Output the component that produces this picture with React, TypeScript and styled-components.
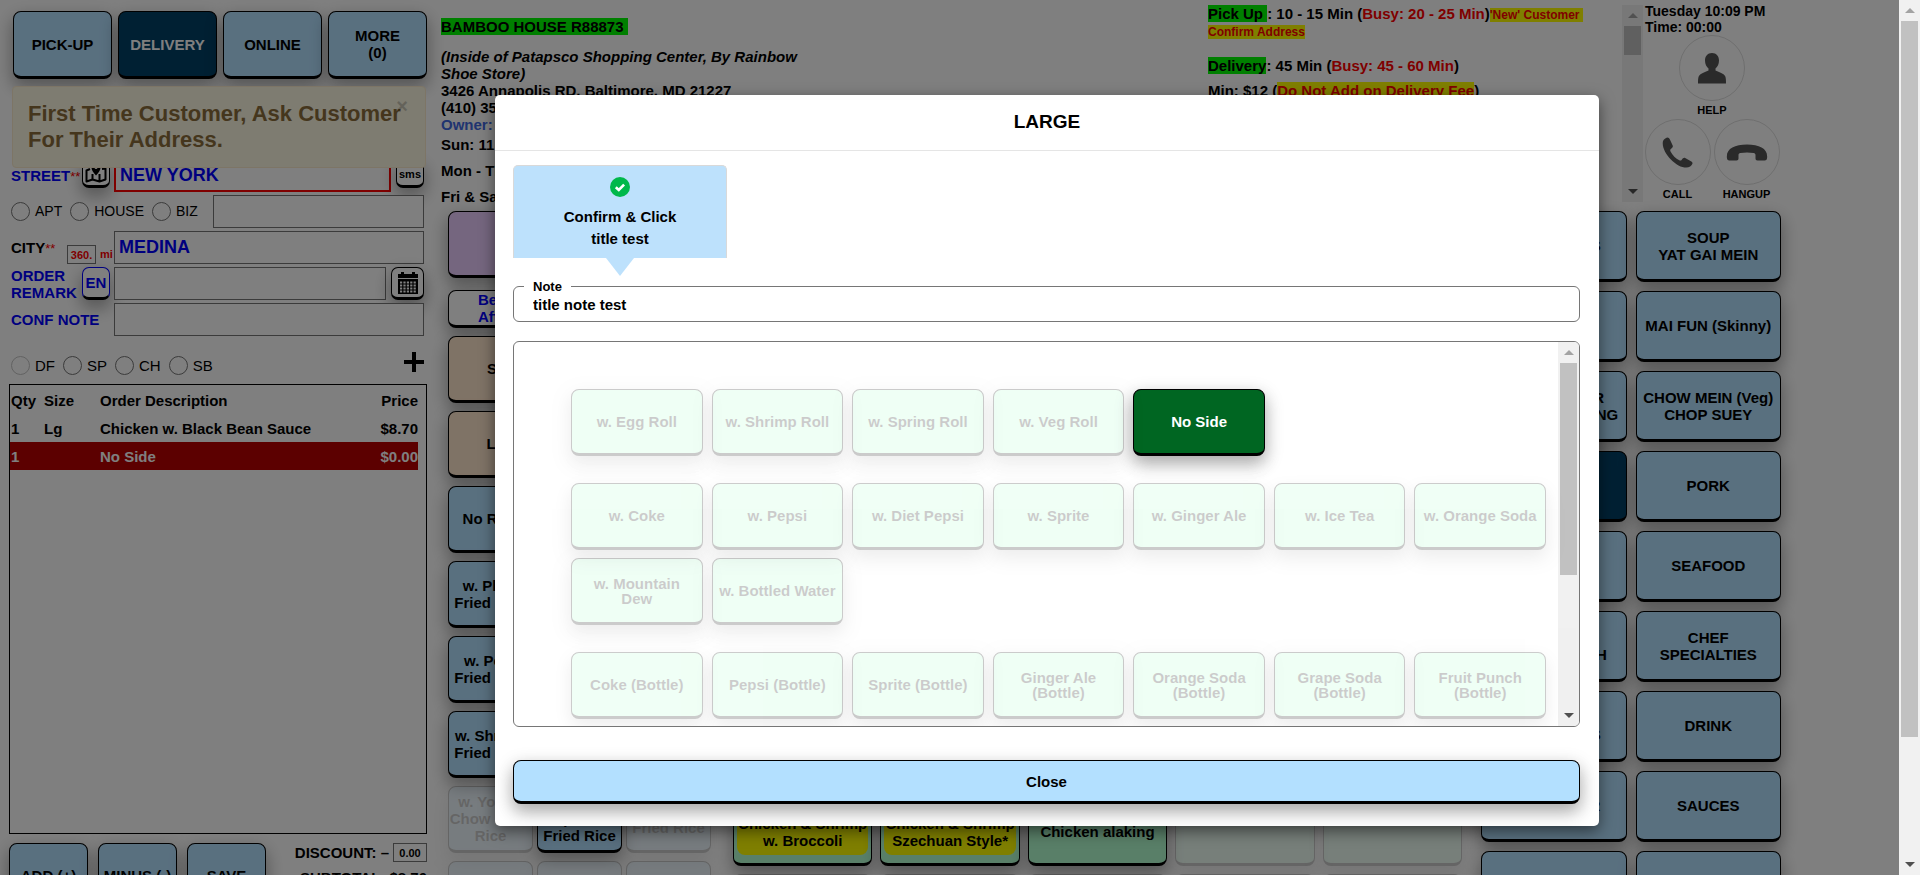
import React from "react";
import styled, { createGlobalStyle, css } from "styled-components";

const GlobalStyle = createGlobalStyle`
  *, *::before, *::after { box-sizing: border-box; }
  body {
    margin: 0;
    background: #fff;
    color: #000;
    font: bold 15px/17px "Liberation Sans", Arial, sans-serif;
  }
  button, input { font: inherit; color: inherit; margin: 0; }
  button { cursor: pointer; }
  p, h1, h2, fieldset { margin: 0; font: inherit; }
`;

/* ---------- shell ---------- */

const Shell = styled.div`
  display: flex;
  height: 100vh;
  overflow: hidden;
`;

const Screen = styled.div`
  position: relative;
  flex: 1;
  min-width: 0;
  overflow: hidden;
`;

const Page = styled.main`
  display: flex;
  padding-right: 118px;
`;

/* ---------- scroll bars ---------- */

const Track = styled.div`
  display: grid;
  grid-template-rows: 21px minmax(0, 1fr) 21px;
  justify-items: center;
  width: 21px;
  flex: none;
  background: #f1f1f1;
`;

const Lane = styled.div`
  width: 17px;
`;

const Thumb = styled.div<{ $size: number }>`
  height: ${(p) => p.$size}%;
  background: #c1c1c1;
`;

const Arrow = styled.span<{ $down?: boolean }>`
  align-self: center;
  border: 5px solid transparent;
  ${(p) =>
    p.$down
      ? css`border-top-color: #505050; border-bottom: 0;`
      : css`border-bottom-color: #a3a3a3; border-top: 0;`}
`;

const ScrollBar = ({ size }: { size: number }) => (
  <Track aria-hidden="true">
    <Arrow />
    <Lane>
      <Thumb $size={size} />
    </Lane>
    <Arrow $down />
  </Track>
);

/* ---------- buttons ---------- */

type Tone = "sky" | "navy" | "mint" | "forest" | "lilac" | "sand" | "plain";

const tones: Record<Tone, string> = {
  sky: "#b3e0ff",
  navy: "#004066",
  mint: "#b3ffd1",
  forest: "#006622",
  lilac: "#ebccff",
  sand: "#ffe6cc",
  plain: "#ffffff",
};

const Key = styled.button<{ $tone: Tone; $h?: number; $tight?: boolean }>`
  display: flex;
  align-items: center;
  justify-content: center;
  width: 100%;
  min-width: 0;
  height: ${(p) => p.$h ?? 67}px;
  padding: 0;
  border: 1px solid #000;
  border-bottom-width: 3px;
  border-radius: 8px;
  background: ${(p) => tones[p.$tone]};
  color: ${(p) => (p.$tone === "navy" || p.$tone === "forest" ? "#fff" : "#000")};
  line-height: ${(p) => (p.$tight ? 15 : 17)}px;
  text-align: center;
  white-space: pre;
  box-shadow: 0 8px 16px rgba(0, 0, 0, 0.2), 0 6px 20px rgba(0, 0, 0, 0.19);
  &:disabled {
    opacity: 0.2;
    cursor: default;
  }
`;

const SmallKey = styled.button<{ $w: number; $h: number; $color?: string }>`
  display: flex;
  align-items: center;
  justify-content: center;
  flex: none;
  width: ${(p) => p.$w}px;
  height: ${(p) => p.$h}px;
  padding: 0;
  border: 1px solid currentColor;
  border-bottom: 3px solid #000;
  border-radius: 7px;
  background: #fff;
  color: ${(p) => p.$color ?? "#000"};
  box-shadow: 0 8px 16px rgba(0, 0, 0, 0.2), 0 6px 20px rgba(0, 0, 0, 0.19);
`;

const TextKey = styled(SmallKey)`
  padding-top: 4px;
  font-size: 11px;
`;

/* ---------- order panel ---------- */

const OrderPanel = styled.section`
  flex: none;
  width: 440px;
  padding: 11px 13px 0 9px;
`;

const OrderTypes = styled.nav`
  display: grid;
  grid-template-columns: repeat(4, 1fr);
  gap: 6px;
  margin-left: 4px;
`;

const Form = styled.form`
  position: relative;
  display: flex;
  flex-direction: column;
  gap: 3px;
  padding: 80px 3px 0 2px;
`;

const Notice = styled.div`
  position: absolute;
  z-index: 1;
  top: 7px;
  left: 3px;
  right: 1px;
  height: 82px;
  padding: 14px 15px;
  border: 1px solid #faebcc;
  border-radius: 4px;
  background: #fcf8e3;
  color: #8a6d3b;
  font-size: 22px;
  line-height: 26px;
  white-space: pre;
`;

const NoticeClose = styled.button`
  position: absolute;
  top: 7px;
  right: 17px;
  padding: 0;
  border: 0;
  background: none;
  color: #000;
  opacity: 0.2;
  font-size: 20px;
  line-height: 24px;
`;

const Row = styled.div`
  display: flex;
  height: 33px;
`;

const Label = styled.label<{ $blue?: boolean; $w?: number }>`
  flex: none;
  align-self: center;
  width: ${(p) => p.$w ?? 103}px;
  color: ${(p) => (p.$blue ? "#0000ff" : "#000")};
  white-space: pre;
`;

const Mark = styled.span`
  color: #ff0000;
  font-size: 13px;
  font-weight: normal;
`;

const Field = styled.input<{ $alert?: boolean; $w?: number }>`
  ${(p) => (p.$w ? css`width: ${p.$w}px; margin-left: auto;` : css`flex: 1; min-width: 0;`)}
  height: 100%;
  padding: 0 4px;
  border: ${(p) => (p.$alert ? "2px solid #ff0000" : "1px solid #767676")};
  border-radius: 0;
  background: #fff;
  color: #0000ff;
  font-size: 18px;
`;

const Spacer = styled.span<{ $w: number }>`
  flex: none;
  width: ${(p) => p.$w}px;
`;

const TinyField = styled.input<{ $color: string; $w: number }>`
  flex: none;
  width: ${(p) => p.$w}px;
  height: 19px;
  padding: 0 2px;
  border: 1px solid #767676;
  background: #fff;
  color: ${(p) => p.$color};
  font-size: 11px;
  text-align: center;
`;

const Distance = styled.label`
  display: flex;
  align-items: center;
  align-self: flex-end;
  gap: 4px;
  width: 47px;
  color: #ff0000;
  font-size: 11px;
`;

const Choices = styled.div<{ $size: number }>`
  display: flex;
  align-items: center;
  gap: 8px;
  font-size: ${(p) => p.$size}px;
  font-weight: normal;
`;

const Choice = styled.label`
  display: flex;
  align-items: center;
  gap: 5px;
`;

const Radio = styled.input`
  appearance: none;
  width: 19px;
  height: 19px;
  border: 1px solid #767676;
  border-radius: 50%;
  background: #fff;
  &:disabled {
    border-color: #c4c4c4;
  }
`;

const OptionRow = styled.div`
  display: flex;
  align-items: center;
  justify-content: space-between;
  height: 32px;
  margin-top: 13px;
  padding: 0 3px 0 2px;
`;

const PlusButton = styled.button`
  display: flex;
  padding: 0;
  margin-bottom: 6px;
  border: 0;
  background: none;
`;

const OrderBox = styled.div`
  min-height: 450px;
  margin-top: 3px;
  padding: 1px 8px 0 0;
  border: 1px solid #000;
`;

const OrderTable = styled.table`
  width: 100%;
  border-collapse: collapse;
  table-layout: fixed;
  th, td {
    height: 28px;
    padding: 0 0 0 1px;
    text-align: left;
    font-weight: bold;
  }
  th:nth-child(1) { width: 33px; }
  th:nth-child(2) { width: 56px; }
  th:last-child { width: 60px; }
  th:last-child, td:last-child { text-align: right; }
`;

const Line = styled.tr<{ $picked?: boolean }>`
  ${(p) => p.$picked && css`background: #b80000; color: #fff;`}
`;

const OrderFoot = styled.div`
  display: flex;
  justify-content: space-between;
  margin-top: 9px;
`;

const FootKeys = styled.div`
  display: grid;
  grid-template-columns: repeat(3, 79px);
  gap: 10px;
`;

const Totals = styled.div`
  display: flex;
  flex-direction: column;
  align-items: flex-end;
  gap: 7px;
  white-space: pre;
`;

const Discount = styled.label`
  display: flex;
  align-items: center;
  gap: 4px;
`;

/* ---------- store info ---------- */

const Workspace = styled.div`
  flex: 1;
  min-width: 0;
  margin-left: 1px;
`;

const TopBar = styled.header`
  display: flex;
  height: 202px;
  padding-top: 3px;
`;

const InfoPane = styled.div`
  display: flex;
  flex: 1;
  min-width: 0;
  margin-top: 2px;
  overflow: hidden;
`;

const InfoText = styled.div`
  display: grid;
  grid-template-columns: 767fr 414fr;
  flex: 1;
  min-width: 0;
  overflow: hidden;
`;

const Store = styled.div`
  max-width: 380px;
  padding-top: 13px;
  p { margin-bottom: 9px; }
`;

const StoreName = styled.h1`
  margin-bottom: 13px;
  line-height: 17px;
`;

const Address = styled.div`
  margin-bottom: 3px;
`;

const Hl = styled.mark<{ $bg: string; $fg?: string; $small?: boolean }>`
  background: ${(p) => p.$bg};
  color: ${(p) => p.$fg ?? "#000"};
  white-space: pre-wrap;
  ${(p) => p.$small && css`font-size: 12px; line-height: 12px;`}
`;

const Red = styled.span`
  color: #ff0000;
`;

const Owner = styled.span`
  color: #4169e1;
`;

const Times = styled.div`
  p:nth-child(1) { margin-bottom: 18px; }
  p:nth-child(2) { margin-bottom: 8px; }
`;

const Contact = styled.aside`
  flex: none;
  width: 138px;
  padding: 0 2px;
  font-size: 14px;
  line-height: 16px;
  white-space: pre;
`;

const CallRow = styled.div`
  display: flex;
  justify-content: center;
  gap: 3px;
`;

const CallItem = styled.button`
  display: flex;
  flex-direction: column;
  align-items: center;
  width: 66px;
  height: 84px;
  padding: 0;
  border: 0;
  background: none;
  font-size: 11px;
  line-height: 19px;
`;

const Round = styled.span`
  display: flex;
  flex: none;
  align-items: center;
  justify-content: center;
  width: 66px;
  height: 66px;
  border: 1px solid #ddd;
  border-radius: 50%;
`;

/* ---------- menu ---------- */

const MenuArea = styled.div`
  display: flex;
  padding: 9px 0 0 7px;
`;

const Options = styled.div`
  display: grid;
  grid-template-columns: repeat(6, 1fr);
  column-gap: 4px;
  row-gap: 8px;
  align-content: start;
  flex: none;
  width: 263px;
  margin-right: 22px;
`;

const OptionCell = styled.div<{ $span: number; $before?: number }>`
  grid-column: span ${(p) => p.$span};
  margin-top: ${(p) => p.$before ?? 0}px;
`;

const BlueText = styled.span`
  width: 100%;
  padding-left: 29px;
  color: #0000ff;
  text-align: left;
`;

const Dishes = styled.div`
  display: grid;
  grid-template-columns: repeat(5, 1fr);
  gap: 8px;
  align-content: start;
  flex: 1;
  min-width: 0;
  padding-top: 63px;
`;

const Spicy = styled.span`
  width: 100%;
  margin: 0 3px;
  padding: 6px 0;
  border-radius: 8px;
  background: #ffff00;
`;

const Categories = styled.nav`
  display: grid;
  grid-template-columns: 1fr 1fr;
  gap: 9px;
  align-content: start;
  flex: none;
  width: 300px;
  margin-left: 19px;
`;

/* ---------- dialog ---------- */

const Backdrop = styled.div`
  position: absolute;
  z-index: 2;
  inset: 0;
  padding: 95px 300px 0 495px;
  background: rgba(0, 0, 0, 0.5);
`;

const Dialog = styled.section`
  border-radius: 5px;
  background: #fff;
  box-shadow: 0 5px 15px rgba(0, 0, 0, 0.5);
`;

const DialogTitle = styled.h2`
  padding: 16px 0 18px;
  border-bottom: 1px solid #e5e5e5;
  font-size: 19px;
  line-height: 21px;
  text-align: center;
`;

const DialogBody = styled.div`
  padding: 14px 19px 22px 18px;
`;

const Callout = styled.div`
  position: relative;
  display: flex;
  flex-direction: column;
  align-items: center;
  width: 214px;
  height: 93px;
  padding-top: 11px;
  border: 1px solid #d9d9d9;
  border-bottom: 0;
  border-radius: 5px 5px 0 0;
  background: #bde1fc;
  line-height: 22px;
  &::after {
    content: "";
    position: absolute;
    top: 100%;
    border: 14px solid transparent;
    border-top: 18px solid #bde1fc;
    border-bottom: 0;
  }
  svg { margin-bottom: 9px; }
`;

const NoteBox = styled.fieldset`
  min-width: 0;
  height: 43px;
  margin-top: 21px;
  padding: 0 19px;
  border: 1px solid #767676;
  border-radius: 6px;
`;

const NoteLegend = styled.legend`
  margin-left: -9px;
  padding: 0 9px;
  font-size: 13px;
  line-height: 15px;
`;

const NoteInput = styled.input`
  display: block;
  width: 100%;
  height: 21px;
  padding: 0;
  border: 0;
  background: none;
`;

const SideBox = styled.div`
  display: flex;
  height: 386px;
  margin: 19px 0 33px;
  border: 1px solid #767676;
  border-radius: 6px;
  overflow: hidden;
`;

const SideGroups = styled.div`
  display: flex;
  flex-direction: column;
  gap: 27px;
  flex: 1;
  min-width: 0;
  padding: 47px 12px 0 57px;
`;

const SideGroup = styled.div`
  display: grid;
  grid-template-columns: repeat(7, 1fr);
  gap: 8px 9px;
`;

/* ---------- icons ---------- */

const MapIcon = () => (
  <svg width="22" height="20" viewBox="0 0 22 20" fill="none" stroke="#000" strokeWidth="2" strokeLinejoin="round">
    <path d="M5 6 1.500 7.500v11l6-2 7 2 6-2v-11L17 6M7.500 11v5.500M14.500 11v7.500" />
    <path d="M11 12.500C8.500 9.500 6.500 7 6.500 4.700a4.500 4.500 0 0 1 9 0C15.500 7 13.500 9.500 11 12.500Z" fill="#000" stroke="none" />
    <circle cx="11" cy="4.500" r="1.500" fill="#fff" stroke="none" />
  </svg>
);

const CalendarIcon = () => (
  <svg width="22" height="24" viewBox="0 0 22 24">
    <path d="M1 3h3V1h3v2h8V1h3v2h3v4H1ZM1 8h20v15H1Z" fill="#000" />
    <g fill="#fff">
      {[0, 1, 2, 3].map((r) =>
        [0, 1, 2, 3, 4].map((c) => (
          <rect key={`${r}${c}`} x={3 + c * 3.4} y={10.5 + r * 3} width="2.200" height="2" />
        ))
      )}
    </g>
  </svg>
);

const PlusIcon = () => (
  <svg width="20" height="20" viewBox="0 0 20 20" stroke="#000" strokeWidth="4">
    <path d="M10 0v20M0 10h20" />
  </svg>
);

const PersonIcon = () => (
  <svg width="28" height="31" viewBox="0 0 28 31" fill="#555">
    <path d="M14 0c4.500 0 7 3.200 7 7.500 0 3.600-1.400 6.500-3.500 8v2c4 1.800 8 3 9.600 5.500.9 1.500.9 5 .9 7.500H0c0-2.500 0-6 .9-7.500C2.500 20.500 6.500 19.300 10.500 17.500v-2C8.400 14 7 11.100 7 7.500 7 3.200 9.500 0 14 0Z" />
  </svg>
);

const PhoneIcon = () => (
  <svg width="31" height="31" viewBox="0 0 31 31" fill="#555">
    <path d="M1 4C2 1.800 4.500.6 5.500.6c1.200 0 2 1 3 3.200l2.200 4.700c.5 1.300-.2 2.200-1.700 3.300-1 .8-1 1.600-.3 2.900 1.800 3.400 5 6.800 8.600 8.600 1 .5 1.700.3 2.500-.6 1.200-1.500 2-2.300 3.400-1.600l5.300 3c1.800 1 2.300 1.700 1.800 3-.7 1.700-3 3.500-6 3.500C14 30.600-1.500 14.500 1 4Z" />
  </svg>
);

const HangupIcon = () => (
  <svg width="42" height="17" viewBox="0 0 42 17" fill="#555">
    <path d="M1 14.500C-.5 5 8 .5 21 .5S42.500 5 41 14.500c-.2 1.300-1 2-2.200 2h-7.300c-1.300 0-2-.7-2-2v-3.300c0-1.300-.6-2-1.900-2.200a45 45 0 0 0-13.200 0c-1.300.2-1.900.9-1.900 2.200v3.300c0 1.300-.7 2-2 2H3.200c-1.200 0-2-.7-2.200-2Z" />
  </svg>
);

const TickIcon = () => (
  <svg width="20" height="20" viewBox="0 0 20 20">
    <circle cx="10" cy="10" r="10" fill="#00b84a" />
    <path d="m5.800 10.200 3 2.800 5.300-5.300" fill="none" stroke="#fff" strokeWidth="2.600" />
  </svg>
);

/* ---------- data ---------- */

type Item = { text: string; tone?: Tone; off?: boolean; spicy?: boolean };

const rice: Item[] = [
  { text: "w. Plain\nFried Rice" },
  { text: "w. Beef\nFried Rice" },
  { text: "w. Veg\nFried Rice" },
  { text: "w. Pork\nFried Rice" },
  { text: "w. Ham\nFried Rice" },
  { text: "w. Egg\nFried Rice" },
  { text: "w. Shrimp\nFried Rice" },
  { text: "w. Crab\nFried Rice" },
  { text: "w. Onion\nFried Rice" },
  { text: "w. Young\nChow Fried\nRice", off: true },
  { text: "w. House\nSpecial\nFried Rice" },
  { text: "w. Duck\nFried Rice", off: true },
  { text: "", off: true },
  { text: "", off: true },
  { text: "", off: true },
];

const emptySlots = (n: number): Item[] => Array.from({ length: n }, () => ({ text: "", off: true }));

const dishes: Item[] = [
  ...emptySlots(35),
  { text: "Chicken & Shrimp\nw. Broccoli", spicy: true },
  { text: "Chicken & Shrimp\nSzechuan Style*", spicy: true },
  { text: "Chicken alaking" },
  ...emptySlots(7),
];

const categories: Item[] = [
  { text: "APPETIZERS" },
  { text: "SOUP\nYAT GAI MEIN" },
  { text: "LO MEIN" },
  { text: "MAI FUN (Skinny)" },
  { text: "SWEET SOUR\nEGG FOO YOUNG" },
  { text: "CHOW MEIN (Veg)\nCHOP SUEY" },
  { text: "CHICKEN", tone: "navy" },
  { text: "PORK" },
  { text: "BEEF" },
  { text: "SEAFOOD" },
  { text: "DAILY\nVALUE LUNCH" },
  { text: "CHEF\nSPECIALTIES" },
  { text: "HEALTHY\nDIET DISHES" },
  { text: "DRINK" },
  { text: "SIDE ORDER" },
  { text: "SAUCES" },
  { text: "DESSERT" },
  { text: "EXTRA" },
];

const sides: string[][] = [
  ["w. Egg Roll", "w. Shrimp Roll", "w. Spring Roll", "w. Veg Roll", "No Side"],
  [
    "w. Coke", "w. Pepsi", "w. Diet Pepsi", "w. Sprite", "w. Ginger Ale", "w. Ice Tea", "w. Orange Soda",
    "w. Mountain\nDew", "w. Bottled Water",
  ],
  [
    "Coke (Bottle)", "Pepsi (Bottle)", "Sprite (Bottle)", "Ginger Ale\n(Bottle)", "Orange Soda\n(Bottle)",
    "Grape Soda\n(Bottle)", "Fruit Punch\n(Bottle)",
  ],
];

/* ---------- sections ---------- */

const OrderSection = () => (
  <OrderPanel>
    <OrderTypes>
      <Key $tone="sky" $h={68}>PICK-UP</Key>
      <Key $tone="navy" $h={68}>DELIVERY</Key>
      <Key $tone="sky" $h={68}>ONLINE</Key>
      <Key $tone="sky" $h={68}>{"MORE\n(0)"}</Key>
    </OrderTypes>
    <Form onSubmit={(e) => e.preventDefault()}>
      <Notice role="alert">
        {"First Time Customer, Ask Customer\nFor Their Address."}
        <NoticeClose type="button" aria-label="Dismiss">×</NoticeClose>
      </Notice>
      <Row>
        <Label $blue $w={71} htmlFor="street">STREET<Mark>**</Mark></Label>
        <SmallKey type="button" $w={28} $h={29} aria-label="Open map"><MapIcon /></SmallKey>
        <Spacer $w={4} />
        <Field id="street" $alert defaultValue="NEW YORK" />
        <Spacer $w={5} />
        <TextKey type="button" $w={28} $h={29}>sms</TextKey>
      </Row>
      <Row>
        <Choices $size={14}>
          <Choice><Radio type="radio" name="place" />APT</Choice>
          <Choice><Radio type="radio" name="place" />HOUSE</Choice>
          <Choice><Radio type="radio" name="place" />BIZ</Choice>
        </Choices>
        <Field $w={211} aria-label="Unit" />
      </Row>
      <Row>
        <Label $w={56} htmlFor="city">CITY<Mark>**</Mark></Label>
        <Distance>
          <TinyField $w={29} $color="#ff0000" defaultValue="360." />mi
        </Distance>
        <Field id="city" defaultValue="MEDINA" />
      </Row>
      <Row>
        <Label $blue $w={71} htmlFor="remark">{"ORDER\nREMARK"}</Label>
        <SmallKey type="button" $w={28} $h={33} $color="#0000ff">EN</SmallKey>
        <Spacer $w={4} />
        <Field id="remark" />
        <Spacer $w={5} />
        <SmallKey type="button" $w={33} $h={33} aria-label="Pick a date"><CalendarIcon /></SmallKey>
      </Row>
      <Row>
        <Label $blue htmlFor="conf">CONF NOTE</Label>
        <Field id="conf" />
      </Row>
    </Form>
    <OptionRow>
      <Choices $size={15}>
        <Choice><Radio type="radio" name="kind" disabled />DF</Choice>
        <Choice><Radio type="radio" name="kind" />SP</Choice>
        <Choice><Radio type="radio" name="kind" />CH</Choice>
        <Choice><Radio type="radio" name="kind" />SB</Choice>
      </Choices>
      <PlusButton aria-label="Add line"><PlusIcon /></PlusButton>
    </OptionRow>
    <OrderBox>
      <OrderTable>
        <thead>
          <tr><th>Qty</th><th>Size</th><th>Order Description</th><th>Price</th></tr>
        </thead>
        <tbody>
          <Line><td>1</td><td>Lg</td><td>Chicken w. Black Bean Sauce</td><td>$8.70</td></Line>
          <Line $picked><td>1</td><td /><td>No Side</td><td>$0.00</td></Line>
        </tbody>
      </OrderTable>
    </OrderBox>
    <OrderFoot>
      <FootKeys>
        <Key $tone="sky">ADD (+)</Key>
        <Key $tone="sky">MINUS (-)</Key>
        <Key $tone="sky">SAVE</Key>
      </FootKeys>
      <Totals>
        <Discount>DISCOUNT: –<TinyField $w={34} $color="#000" defaultValue="0.00" /></Discount>
        <span>SUBTOTAL: $8.70</span>
      </Totals>
    </OrderFoot>
  </OrderPanel>
);

const StoreHeader = () => (
  <TopBar>
    <InfoPane>
      <InfoText>
        <Store>
          <StoreName><Hl $bg="#00ff00">{"BAMBOO HOUSE R88873 "}</Hl></StoreName>
          <Address>
            <em>(Inside of Patapsco Shopping Center, By Rainbow Shoe Store)</em><br />
            3426 Annapolis RD, Baltimore, MD 21227<br />
            (410) 355-8873<br />
            <Owner>Owner: Lin</Owner>
          </Address>
          <p>Sun: 11:30 - 10:00</p>
          <p>Mon - Thu: 11:00 - 10:30</p>
          <p>Fri &amp; Sat: 11:00 - 11:30</p>
        </Store>
        <Times>
          <p>
            <Hl $bg="#00ff00">{"Pick Up "}</Hl>: 10 - 15 Min (<Red>Busy: 20 - 25 Min</Red>)
            <Hl $bg="#ffff00" $fg="#ff0000" $small>'New' Customer Confirm Address</Hl>
          </p>
          <p><Hl $bg="#00ff00">Delivery</Hl>: 45 Min (<Red>Busy: 45 - 60 Min</Red>)</p>
          <p>Min: $12 (<Hl $bg="#ffff00" $fg="#ff0000">Do Not Add on Delivery Fee</Hl>)</p>
        </Times>
      </InfoText>
      <ScrollBar size={19} />
    </InfoPane>
    <Contact>
      {"Tuesday 10:09 PM\nTime: 00:00"}
      <CallRow><CallItem><Round><PersonIcon /></Round>HELP</CallItem></CallRow>
      <CallRow>
        <CallItem><Round><PhoneIcon /></Round>CALL</CallItem>
        <CallItem><Round><HangupIcon /></Round>HANGUP</CallItem>
      </CallRow>
    </Contact>
  </TopBar>
);

const Menu = () => (
  <MenuArea>
    <Options>
      <OptionCell $span={6}><Key $tone="lilac">COMBO</Key></OptionCell>
      <OptionCell $span={3} $before={4}>
        <Key $tone="plain" $h={38}><BlueText>{"Before\nAfter"}</BlueText></Key>
      </OptionCell>
      <OptionCell $span={3} />
      <OptionCell $span={3}><Key $tone="sand">SMALL</Key></OptionCell>
      <OptionCell $span={3} />
      <OptionCell $span={3}><Key $tone="sand">LARGE</Key></OptionCell>
      <OptionCell $span={3} />
      <OptionCell $span={2}><Key $tone="sky">No Rice</Key></OptionCell>
      <OptionCell $span={4} />
      {rice.map((r, i) => (
        <OptionCell key={i} $span={2}><Key $tone="sky" disabled={r.off}>{r.text}</Key></OptionCell>
      ))}
    </Options>
    <Dishes>
      {dishes.map((d, i) => (
        <Key key={i} $tone="mint" disabled={d.off}>
          {d.spicy ? <Spicy>{d.text}</Spicy> : d.text}
        </Key>
      ))}
    </Dishes>
    <Categories>
      {categories.map((c) => (
        <Key key={c.text} $tone={c.tone ?? "sky"} $h={71}>{c.text}</Key>
      ))}
    </Categories>
  </MenuArea>
);

const SideDialog = () => (
  <Backdrop>
    <Dialog role="dialog" aria-modal="true" aria-labelledby="dialog-title">
      <DialogTitle id="dialog-title">LARGE</DialogTitle>
      <DialogBody>
        <Callout>
          <TickIcon />
          <span>Confirm &amp; Click</span>
          <span>title test</span>
        </Callout>
        <NoteBox>
          <NoteLegend>Note</NoteLegend>
          <NoteInput aria-label="Note" defaultValue="title note test" />
        </NoteBox>
        <SideBox>
          <SideGroups>
            {sides.map((group, i) => (
              <SideGroup key={i}>
                {group.map((s) => (
                  <Key key={s} $tight $tone={s === "No Side" ? "forest" : "mint"} disabled={s !== "No Side"}>
                    {s}
                  </Key>
                ))}
              </SideGroup>
            ))}
          </SideGroups>
          <ScrollBar size={62} />
        </SideBox>
        <Key $tone="sky" $h={44}>Close</Key>
      </DialogBody>
    </Dialog>
  </Backdrop>
);

export default function App() {
  return (
    <>
      <GlobalStyle />
      <Shell>
        <Screen>
          <Page>
            <OrderSection />
            <Workspace>
              <StoreHeader />
              <Menu />
            </Workspace>
          </Page>
          <SideDialog />
        </Screen>
        <ScrollBar size={86} />
      </Shell>
    </>
  );
}
